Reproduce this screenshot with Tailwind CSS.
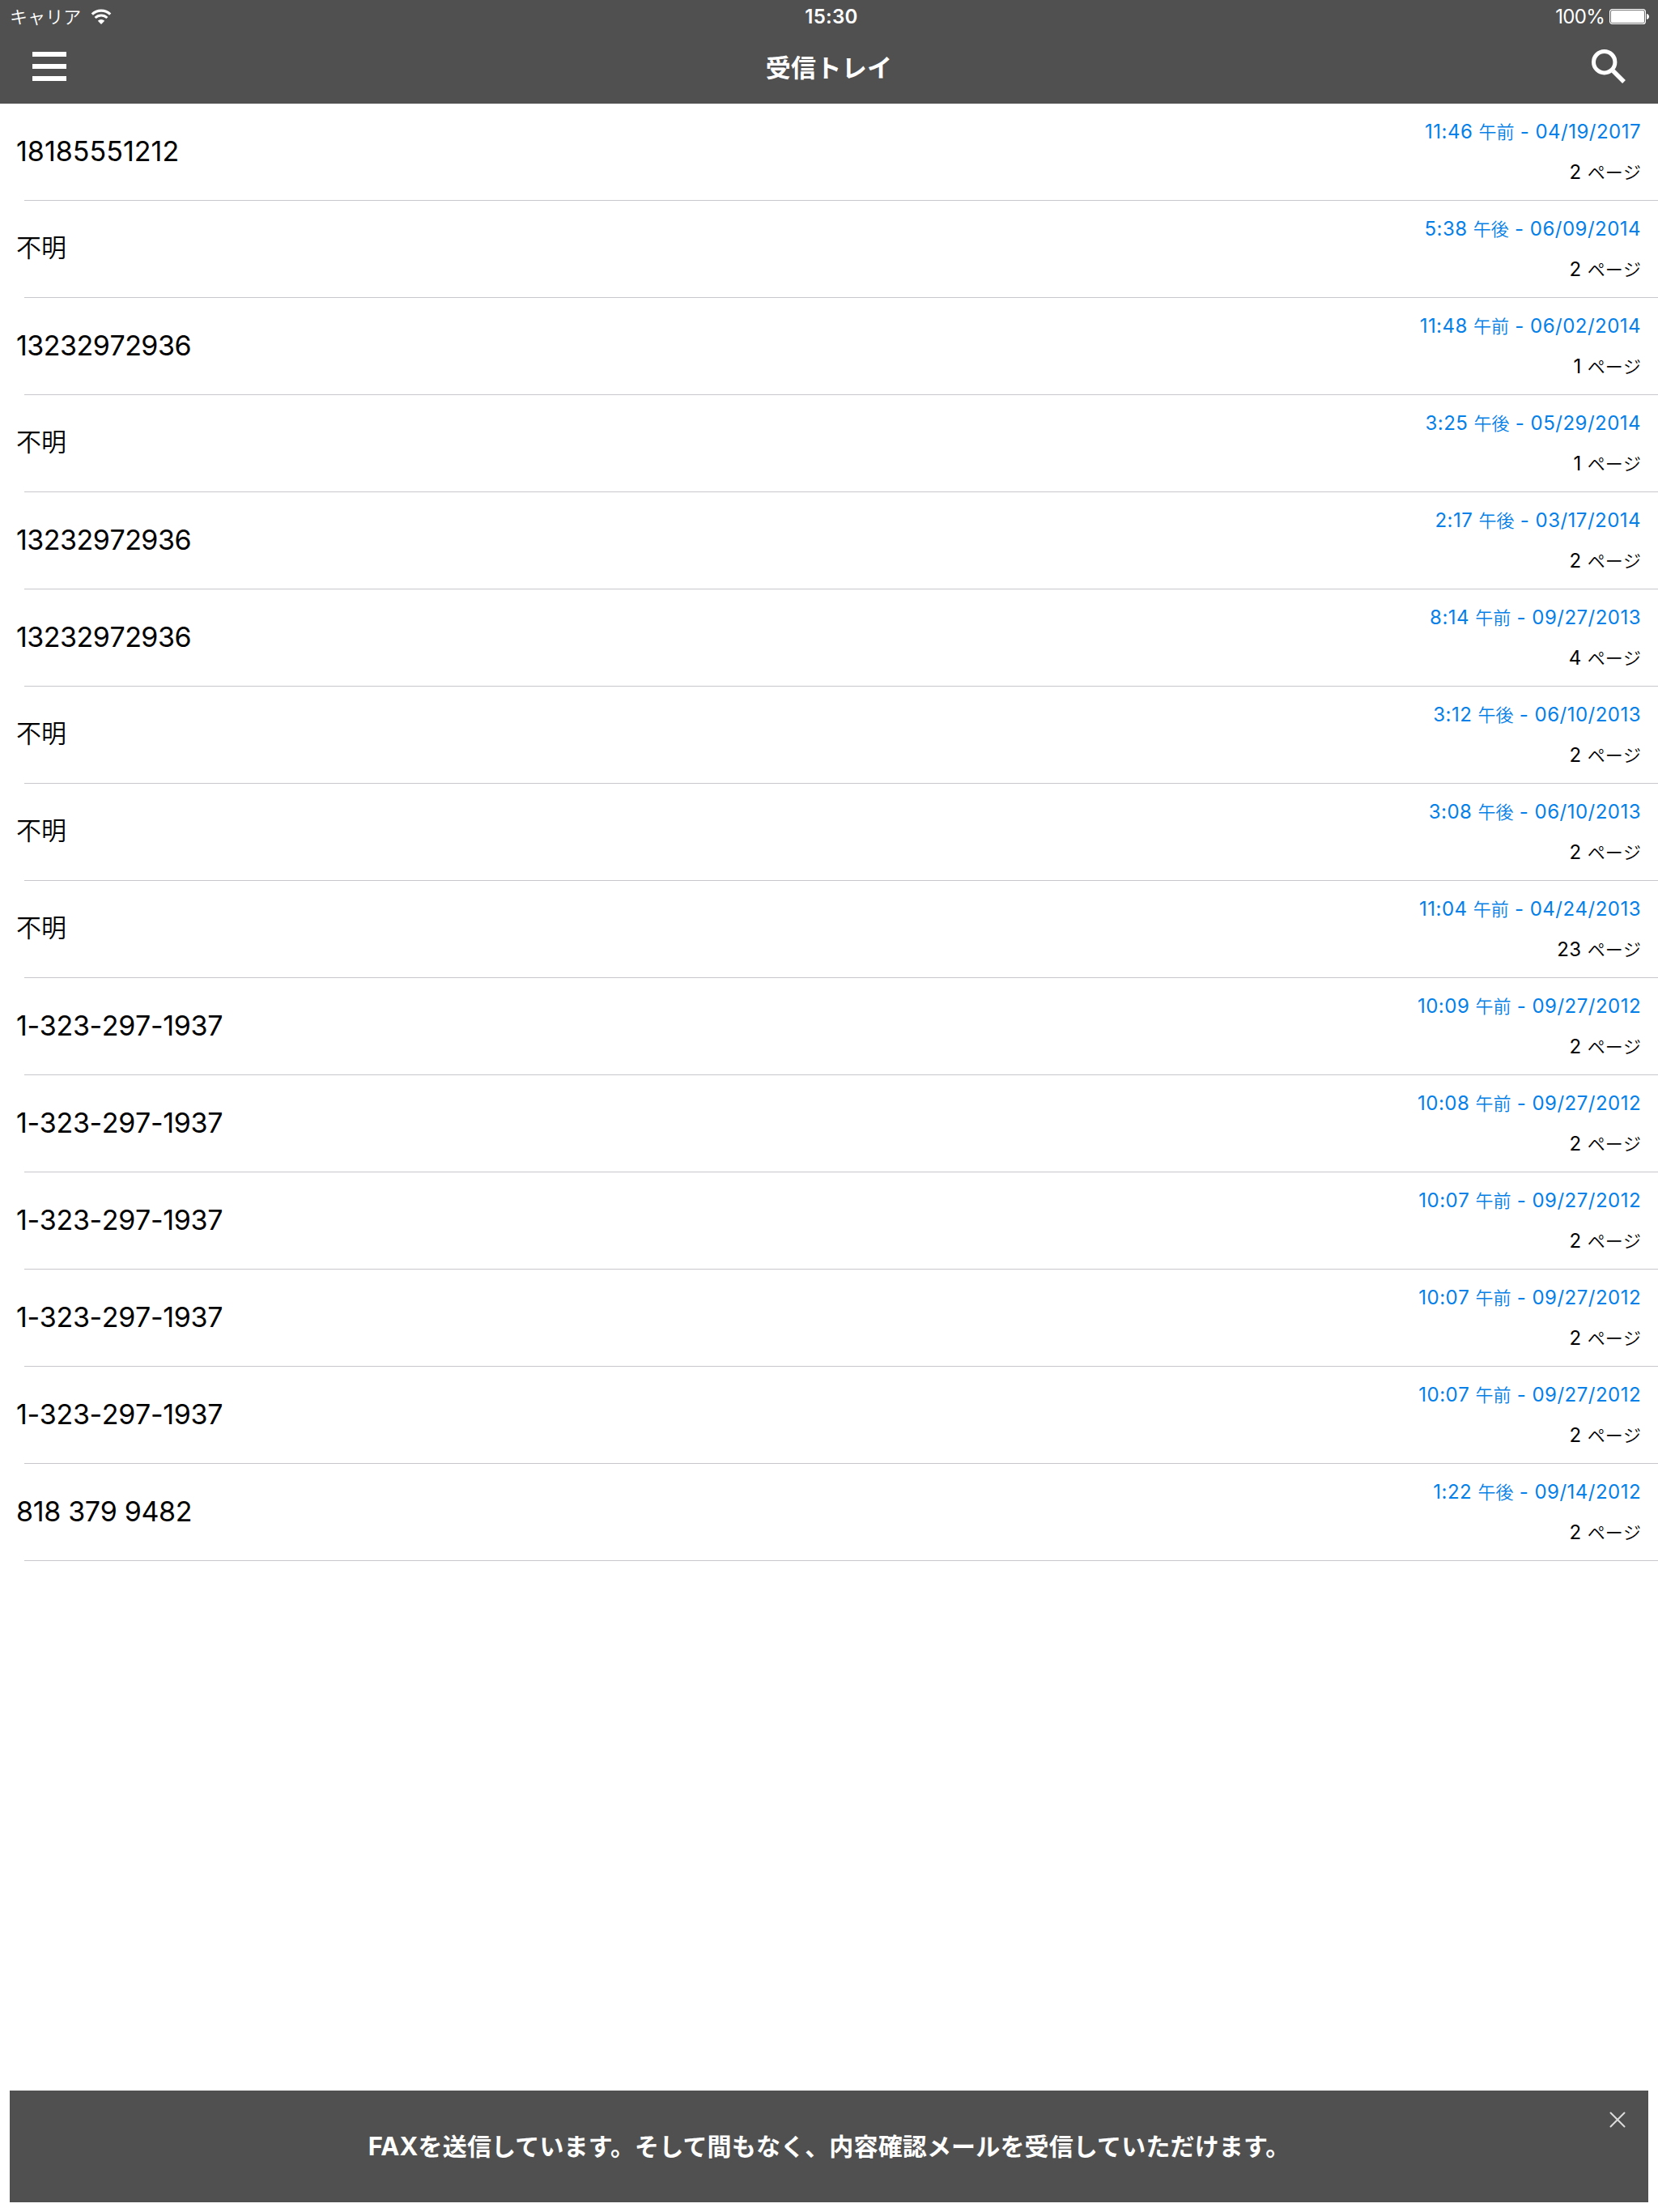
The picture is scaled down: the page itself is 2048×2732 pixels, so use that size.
<!DOCTYPE html>
<html lang="ja">
<head>
  <meta charset="UTF-8" />
  <meta name="viewport" content="width=device-width, initial-scale=1.0"/>
  <title>受信トレイ</title>
  <script src="https://cdn.jsdelivr.net/npm/@tailwindcss/browser@4"></script>
</head>
<body class="bg-white w-[2048px] h-[2732px] flex flex-col overflow-hidden font-['Inter','Noto_Sans_CJK_JP',sans-serif] text-black">

  <header class="h-32 shrink-0 bg-[#505050] text-white flex flex-col">
    <!-- Status bar -->
    <div class="h-10 pt-px grid grid-cols-3 items-center text-2xl leading-[40px] whitespace-nowrap">
      <div class="flex items-center pl-3">
        <span class="text-[22px] font-[350] tracking-[0.1px]">キャリア</span>
        <svg class="ml-3 w-[26px] h-5" viewBox="0 0 26 20" fill="none" stroke="#fff">
          <path d="M1.8 6.6a16 16 0 0 1 22.4 0" stroke-width="3.2"/>
          <path d="M5.6 11a10.6 10.6 0 0 1 14.8 0" stroke-width="3"/>
          <path d="M13 19l-4.2-4.3a6 6 0 0 1 8.4 0z" fill="#fff" stroke="none"/>
        </svg>
      </div>
      <div class="text-center font-semibold pl-1.5 tracking-[0.3px]">15:30</div>
      <div class="flex items-center justify-end pr-[10px]">
        <span class="tracking-[-0.7px] font-[380]">100%</span>
        <svg class="ml-1.5 w-[50px] h-5" viewBox="0 0 50 20" fill="none">
          <rect x="0.6" y="0.6" width="43.8" height="17.8" rx="3" stroke="#fff" stroke-width="1.2"/>
          <rect x="2" y="2" width="41" height="15" rx="1.5" fill="#fff"/>
          <path d="M46 6c4 .6 4 6.4 0 7z" fill="#fff"/>
        </svg>
      </div>
    </div>

    <!-- Nav bar -->
    <div class="h-22 flex items-center justify-between pl-10 pr-10">
      <button class="w-[42px] h-9 flex flex-col justify-between mb-1">
        <span class="block h-1.5 bg-white"></span>
        <span class="block h-1.5 bg-white"></span>
        <span class="block h-1.5 bg-white"></span>
      </button>
      <h1 class="text-[31px] leading-[40px] font-bold tracking-[0.3px]">受信トレイ</h1>
      <button class="mb-1">
        <svg class="w-[42px] h-[42px]" viewBox="0 0 42 42" fill="none" stroke="#fff">
          <circle cx="15.7" cy="15.7" r="13.2" stroke-width="5"/>
          <path d="M26.5 26.5L40 40" stroke-width="5.4"/>
        </svg>
      </button>
    </div>
  </header>

  <main id="faxList" class="flex-1"></main>

  <footer class="relative mx-3 mb-3 h-[138px] shrink-0 bg-[#505050] text-white flex items-center justify-center">
    <p class="text-[30px] leading-[40px] font-bold tracking-[0.15px] whitespace-nowrap"><span class="text-[31px]">FAX</span>を送信しています。そして間もなく、内容確認メールを受信していただけます。</p>
    <svg class="absolute top-[26px] right-[28px] w-5 h-5" viewBox="0 0 20 20" fill="none" stroke="#dcdcdc" stroke-width="2" stroke-linecap="round">
      <path d="M1.5 1.5l17 17M18.5 1.5l-17 17"/>
    </svg>
  </footer>

  <script>
    const faxes = [
      ["18185551212", "11:46", "午前", "04/19/2017", 2],
      ["不明", "5:38", "午後", "06/09/2014", 2],
      ["13232972936", "11:48", "午前", "06/02/2014", 1],
      ["不明", "3:25", "午後", "05/29/2014", 1],
      ["13232972936", "2:17", "午後", "03/17/2014", 2],
      ["13232972936", "8:14", "午前", "09/27/2013", 4],
      ["不明", "3:12", "午後", "06/10/2013", 2],
      ["不明", "3:08", "午後", "06/10/2013", 2],
      ["不明", "11:04", "午前", "04/24/2013", 23],
      ["1-323-297-1937", "10:09", "午前", "09/27/2012", 2],
      ["1-323-297-1937", "10:08", "午前", "09/27/2012", 2],
      ["1-323-297-1937", "10:07", "午前", "09/27/2012", 2],
      ["1-323-297-1937", "10:07", "午前", "09/27/2012", 2],
      ["1-323-297-1937", "10:07", "午前", "09/27/2012", 2],
      ["818 379 9482", "1:22", "午後", "09/14/2012", 2],
    ];

    // numbers full of narrow 1s get looser tracking
    function senderClass(from) {
      if (from === "不明") return "pt-[38px] text-[31px] font-[350]";
      if (from.split("1").length > 4) return "pt-[39px] text-[34px] tracking-[0.03px]";
      if (/[- ]/.test(from)) return "pt-[39px] text-[34px] tracking-[-0.33px]";
      return "pt-[39px] text-[34px] tracking-[-0.5px]";
    }

    document.getElementById("faxList").innerHTML = faxes.map(([from, time, half, date, pages]) => `
      <div class="h-[120px] flex flex-col">
        <div class="flex-1 flex justify-between pl-5 pr-[21px] whitespace-nowrap [font-kerning:none] font-[380]">
          <div class="leading-[40px] ${senderClass(from)}">${from}</div>
          <div class="pt-[21px] text-right text-2xl leading-[28px]">
            <div class="text-[#0580e8] tracking-[0.48px]">${time} <span class="text-[22px] leading-none font-[350] tracking-normal">${half}</span> - ${date}</div>
            <div class="mt-[22px] tracking-[0.4px]">${pages} <span class="text-[22px] leading-none font-[350] tracking-[0.1px]">ページ</span></div>
          </div>
        </div>
        <div class="ml-[30px] h-px bg-[#c8c7cc]"></div>
      </div>`).join("");
  </script>
</body>
</html>
